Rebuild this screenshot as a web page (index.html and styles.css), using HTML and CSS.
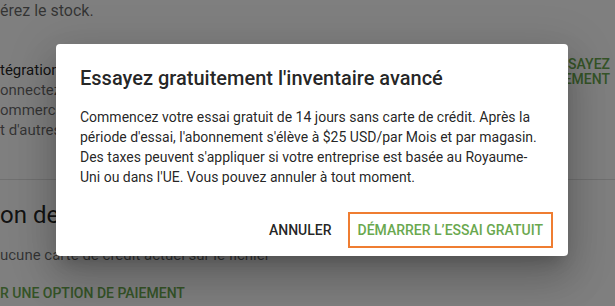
FILE: index.html
```html
<!DOCTYPE html>
<html lang="fr">
<head>
<meta charset="utf-8">
<link rel="stylesheet" href="styles.css">
</head>
<body>
<div class="page">
  <p class="intro">érez le stock.</p>
  <div class="row">
    <div class="row-text">
      <div class="row-title">tégration</div>
      <div class="row-desc">onnectez<br>ommerce<br>t d'autres</div>
    </div>
    <div class="row-action">ESSAYEZ<br>GRATUITEMENT</div>
  </div>
  <hr class="divider">
  <h2 class="section-title">on de</h2>
  <p class="section-desc">ucune carte de crédit actuel sur le fichier</p>
  <div class="section-link">R UNE OPTION DE PAIEMENT</div>
</div>

<div class="overlay">
  <div class="dialog" role="dialog">
    <h1 class="dialog-title">Essayez gratuitement l'inventaire avancé</h1>
    <p class="dialog-body">Commencez votre essai gratuit de 14 jours sans carte de crédit. Après la période d'essai, l'abonnement s'élève à $25 USD/par Mois et par magasin. Des taxes peuvent s'appliquer si votre entreprise est basée au Royaume-Uni ou dans l'UE. Vous pouvez annuler à tout moment.</p>
    <div class="dialog-actions">
      <button class="btn btn-cancel">Annuler</button>
      <button class="btn btn-primary">Démarrer l’essai gratuit</button>
    </div>
  </div>
</div>
</body>
</html>
```

FILE: styles.css
```css
html, body {
  margin: 0;
  padding: 0;
  width: 615px;
  height: 306px;
  overflow: hidden;
  background: #ffffff;
  font-family: Roboto, "Liberation Sans", sans-serif;
}

.page {
  position: relative;
  width: 615px;
  height: 306px;
  color: rgba(0,0,0,0.87);
}

.intro {
  margin: 0;
  padding-top: 1px;
  font-size: 16px;
  line-height: 20px;
  color: rgba(0,0,0,0.6);
}

.row {
  display: flex;
  justify-content: space-between;
  margin-top: 39px;
}

.row-title {
  font-size: 15px;
  line-height: 20px;
  color: rgba(0,0,0,0.87);
}

.row-desc {
  font-size: 15px;
  line-height: 20px;
  color: rgba(0,0,0,0.6);
}

.row-action {
  margin-top: -3px;
  padding-right: 5px;
  font-size: 14px;
  font-weight: 500;
  line-height: 15px;
  color: #6aa84f;
  text-align: right;
}

.divider {
  margin: 39px 0 0 0;
  border: 0;
  border-top: 1px solid rgba(0,0,0,0.12);
}

.section-title {
  margin: 19px 0 0 0;
  font-size: 24px;
  font-weight: 400;
  line-height: 32px;
  color: rgba(0,0,0,0.87);
}

.section-desc {
  margin: 14px 0 0 0;
  font-size: 15px;
  line-height: 20px;
  color: rgba(0,0,0,0.6);
}

.section-link {
  margin-top: 20px;
  font-size: 14px;
  font-weight: 500;
  line-height: 16px;
  color: #6aa84f;
}

.overlay {
  position: absolute;
  inset: 0;
  background: rgba(0,0,0,0.5);
  display: flex;
  align-items: flex-start;
  justify-content: flex-start;
  padding: 44px 0 0 56px;
  box-sizing: border-box;
}

.dialog {
  width: 512px;
  box-sizing: border-box;
  background: #ffffff;
  border-radius: 4px;
  box-shadow: 0 11px 15px -7px rgba(0,0,0,0.2), 0 24px 38px 3px rgba(0,0,0,0.14), 0 9px 46px 8px rgba(0,0,0,0.12);
  padding: 20px 24px 8px 24px;
}

.dialog-title {
  margin: 0;
  font-size: 20px;
  font-weight: 500;
  line-height: 28px;
  color: rgba(0,0,0,0.87);
}

.dialog-body {
  margin: 15px 0 0 0;
  font-size: 14px;
  line-height: 20px;
  color: rgba(0,0,0,0.87);
}

.dialog-actions {
  display: flex;
  justify-content: flex-end;
  align-items: center;
  gap: 8px;
  margin-top: 25px;
  margin-right: -9px;
}

.btn {
  font-family: Roboto, "Liberation Sans", sans-serif;
  font-size: 14px;
  font-weight: 500;
  text-transform: uppercase;
  background: transparent;
  border: 0;
  padding: 0 8px;
  height: 36px;
  cursor: pointer;
}

.btn-cancel {
  color: rgba(0,0,0,0.87);
}

.btn-primary {
  color: #6aa84f;
  border: 2px solid #ef7d31;
  padding: 0 8px;
}
```
